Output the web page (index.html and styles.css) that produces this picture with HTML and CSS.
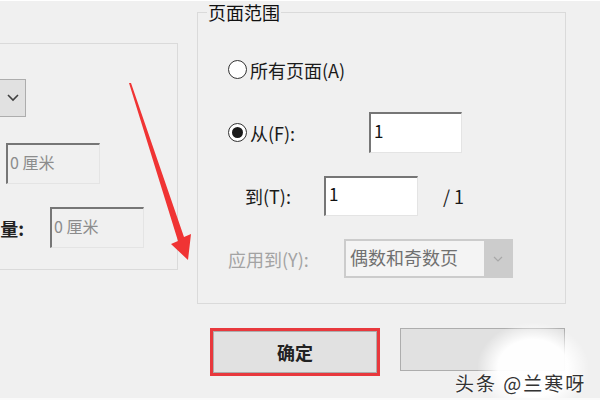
FILE: index.html
```html
<!DOCTYPE html>
<html lang="zh-CN">

<head>
    <meta charset="UTF-8">
    <title>页面设置</title>
    <link rel="stylesheet" href="styles.css">
</head>

<body>
    <div class="screen">
        <section class="margins-group">
            <div class="combo">
                <svg class="chev" width="12" height="8" viewBox="0 0 12 8"><polyline points="1,1 6,6 11,1" /></svg>
            </div>
            <div class="field field-off first">0 厘米</div>
            <div class="offset-row">
                <span class="offset-label">量:</span>
                <div class="field field-off">0 厘米</div>
            </div>
        </section>

        <div class="right-col">
            <section class="range-group">
                <span class="legend">页面范围</span>

                <div class="row row-all">
                    <span class="radio"></span>
                    <span class="txt">所有页面(A)</span>
                </div>

                <div class="row row-from">
                    <div class="choice">
                        <span class="radio checked"></span>
                        <span class="txt">从(F):</span>
                    </div>
                    <div class="field field-on from-box">1</div>
                </div>

                <div class="row row-to">
                    <span class="txt to-label">到(T):</span>
                    <div class="field field-on to-box">1</div>
                    <span class="txt total">/ 1</span>
                </div>

                <div class="row row-apply">
                    <span class="txt apply-label">应用到(Y):</span>
                    <div class="select-off">
                        <span class="select-text">偶数和奇数页</span>
                        <span class="select-btn">
                            <svg width="10" height="6" viewBox="0 0 10 6"><polyline points="1,1 5,5 9,1" /></svg>
                        </span>
                    </div>
                </div>
            </section>

            <div class="buttons">
                <div class="ok-frame">
                    <div class="btn btn-ok">确定</div>
                </div>
                <div class="btn btn-cancel"></div>
            </div>
        </div>
    </div>

    <svg class="arrow" width="600" height="400" viewBox="0 0 600 400">
        <polygon points="129,82 131,82 184,236 191,233 188,259 171,243 178,240" />
    </svg>

    <div class="glare"></div>
    <div class="watermark">头条 @兰寒呀</div>
</body>

</html>
```

FILE: styles.css
```css
body {
    margin: 0;
    width: 600px;
    height: 400px;
    overflow: hidden;
    position: relative;
    box-sizing: border-box;
    border-top: 1px solid #ffffff;
    border-bottom: 2px solid #fafafa;
    background-color: #f0f0f0;
    font-family: "Noto Sans CJK SC", "Liberation Sans", sans-serif;
    color: #1a1a1a;
}

.screen {
    display: flex;
    align-items: flex-start;
}

/* left group box, mostly cut off */
.margins-group {
    margin-left: -50px;
    margin-top: 42px;
    width: 228px;
    height: 227px;
    box-sizing: border-box;
    border: 1px solid #dadada;
    padding-top: 35px;
    display: flex;
    flex-direction: column;
    align-items: flex-start;
}

.combo {
    width: 75px;
    height: 38px;
    box-sizing: border-box;
    border: 1px solid #adadad;
    background-color: #e1e1e1;
    display: flex;
    align-items: center;
    justify-content: flex-end;
    padding-right: 6px;
}

.chev polyline {
    fill: none;
    stroke: #404040;
    stroke-width: 1.6;
}

.field {
    box-sizing: border-box;
    display: flex;
    align-items: center;
    border-top: 2px solid #767676;
    border-left: 2px solid #767676;
    border-right: 1px solid #e4e4e4;
    border-bottom: 1px solid #e4e4e4;
}

.field-off {
    width: 94px;
    height: 41px;
    padding-left: 2px;
    padding-bottom: 4px;
    background-color: #f0f0f0;
    color: #8c8c8c;
    font-size: 16px;
}

.field-off.first {
    margin-left: 55px;
    margin-top: 26px;
}

.offset-row {
    display: flex;
    align-items: center;
    margin-top: 23px;
}

.offset-label {
    width: 73px;
    text-align: right;
    margin-right: 26px;
    font-size: 18px;
    font-weight: bold;
    color: #222;
}

/* right column */
.right-col {
    margin-left: 19px;
    width: 369px;
}

.range-group {
    position: relative;
    margin-top: 11px;
    height: 292px;
    box-sizing: border-box;
    border: 1px solid #dadada;
    padding-top: 36px;
    display: flex;
    flex-direction: column;
    gap: 22px;
}

.legend {
    position: absolute;
    top: -12px;
    left: 9px;
    padding: 0 1px;
    font-size: 18px;
    line-height: 22px;
    background-color: #f0f0f0;
    color: #111;
}

.row {
    height: 41px;
    display: flex;
    align-items: center;
}

.txt {
    font-size: 18px;
    color: #1a1a1a;
}

.radio {
    width: 19px;
    height: 19px;
    box-sizing: border-box;
    border: 1.5px solid #333;
    border-radius: 50%;
    background-color: #fff;
    margin-right: 3px;
    display: flex;
    align-items: center;
    justify-content: center;
}

.radio.checked::after {
    content: "";
    width: 11px;
    height: 11px;
    border-radius: 50%;
    background-color: #1a1a1a;
}

.row-all,
.row-from {
    padding-left: 30px;
}

.choice {
    width: 141px;
    display: flex;
    align-items: center;
}

.field-on {
    background-color: #ffffff;
    color: #111;
    font-size: 17px;
    padding-left: 3px;
    padding-bottom: 6px;
}

.from-box {
    width: 93px;
    height: 41px;
}

.row-to {
    padding-left: 47px;
}

.to-label {
    width: 79px;
}

.to-box {
    width: 94px;
    height: 40px;
}

.total {
    margin-left: 25px;
}

.row-apply {
    padding-left: 30px;
}

.apply-label {
    width: 116px;
    color: #a3a3a3;
}

.select-off {
    width: 169px;
    height: 39px;
    box-sizing: border-box;
    border: 2px solid #cccccc;
    background-color: #f4f4f4;
    display: flex;
}

.select-text {
    flex: 1;
    padding-left: 4px;
    font-size: 18px;
    line-height: 33px;
    color: #707070;
}

.select-btn {
    width: 27px;
    background-color: #cccccc;
    display: flex;
    align-items: center;
    justify-content: center;
}

.select-btn polyline {
    fill: none;
    stroke: #a8a8a8;
    stroke-width: 1.2;
}

/* buttons */
.buttons {
    display: flex;
    align-items: flex-start;
    gap: 20px;
    margin-top: 24px;
    padding-left: 13px;
}

.ok-frame {
    border: 3px solid #e8383d;
}

.btn {
    box-sizing: border-box;
    border: 1px solid #adadad;
    background-color: #e1e1e1;
    display: flex;
    align-items: center;
    justify-content: center;
}

.btn-ok {
    width: 164px;
    height: 42px;
    font-size: 18px;
    font-weight: bold;
    color: #222;
}

.btn-cancel {
    width: 165px;
    height: 43px;
}

/* overlays */
.arrow {
    position: absolute;
    top: 0;
    left: 0;
    pointer-events: none;
}

.arrow polygon {
    fill: #f03434;
}

.glare {
    position: absolute;
    left: 478px;
    top: 322px;
    width: 110px;
    height: 90px;
    background: radial-gradient(ellipse at center, rgba(255, 255, 255, 0.97) 45%, rgba(255, 255, 255, 0) 72%);
}

.watermark {
    position: absolute;
    left: 455px;
    top: 368px;
    font-size: 19px;
    letter-spacing: 2px;
    color: #333;
    text-shadow: 0 0 2px #fff, 0 0 2px #fff;
}
```
